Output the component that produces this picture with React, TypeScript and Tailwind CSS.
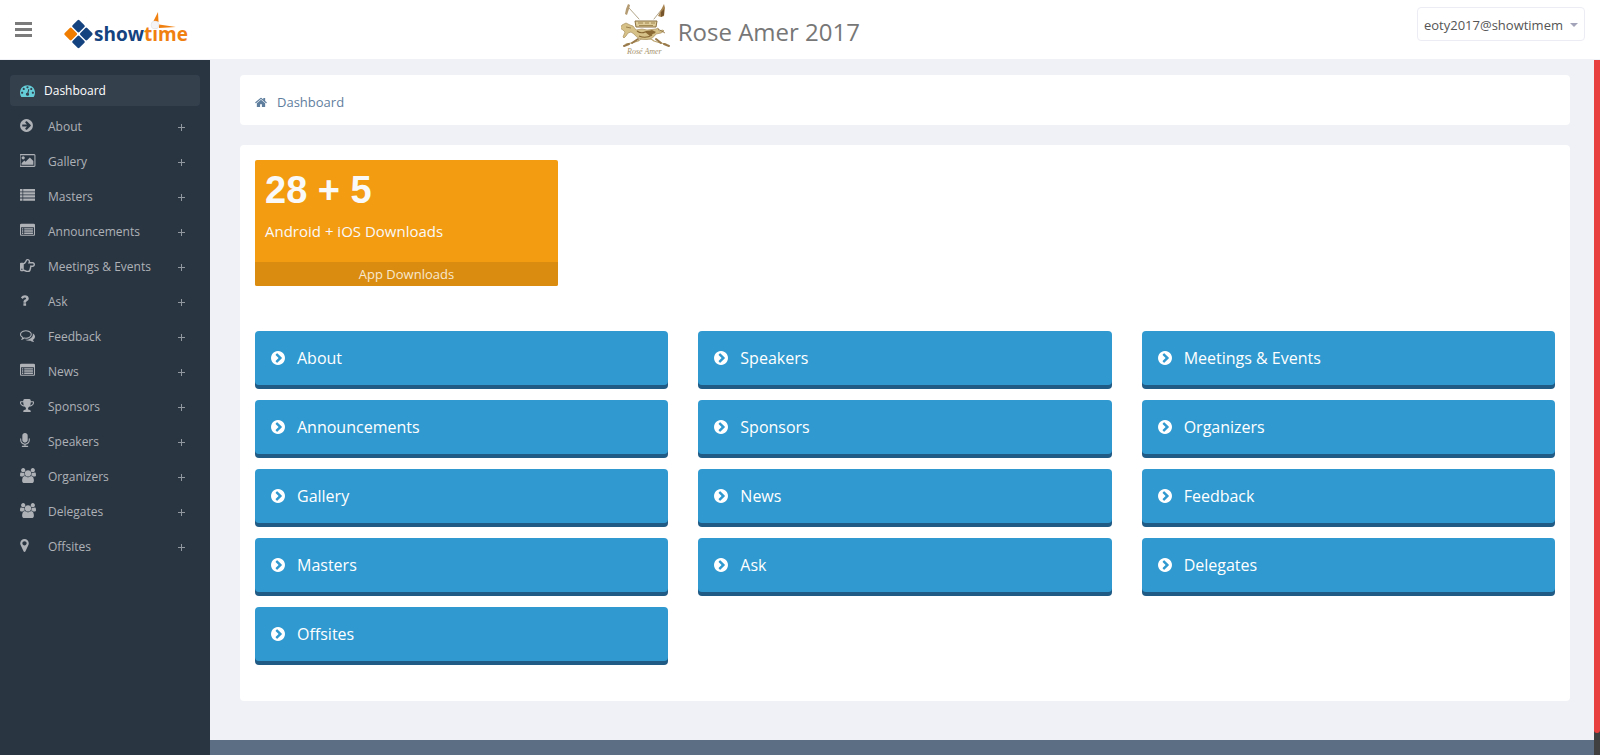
import React from "react";
import { FaRegHandPointRight } from "react-icons/fa";

type Glyph = { box: string; w: string; d: string };

const glyphs: Record<string, Glyph> = {
  dashboard: {
    box: "0 0 1792 1792",
    w: "w-[15px]",
    d: "M384 1152q0-53-37.5-90.5t-90.5-37.500-90.500 37.500-37.500 90.500 37.500 90.500 90.500 37.500 90.500-37.500 37.500-90.500zm192-448q0-53-37.500-90.500t-90.500-37.500-90.500 37.500-37.500 90.500 37.500 90.500 90.500 37.500 90.500-37.500 37.500-90.500zm428 481l101-382q6-26-7.500-48.500t-38.500-29.500-48 6.500-30 39.500l-101 382q-60 5-107 43.500t-63 98.500q-20 77 20 146t117 89 146-20 89-117q16-60-6-117t-72-91zm660-33q0-53-37.500-90.500t-90.500-37.500-90.500 37.500-37.500 90.500 37.500 90.500 90.500 37.500 90.500-37.500 37.500-90.500zm-640-640q0-53-37.500-90.500t-90.500-37.500-90.500 37.500-37.500 90.500 37.500 90.500 90.500 37.500 90.500-37.500 37.500-90.500zm448 192q0-53-37.500-90.500t-90.500-37.500-90.500 37.500-37.500 90.500 37.500 90.500 90.500 37.500 90.500-37.500 37.500-90.500zm320 448q0 261-141 483-19 29-54 29h-1402q-35 0-54-29-141-221-141-483 0-182 71-348t191-286 286-191 348-71 348 71 286 191 191 286 71 348z",
  },
  arrow: {
    box: "128 0 1536 1792",
    w: "w-[13px]",
    d: "M1413 896q0-27-18-45l-91-91-362-362q-18-18-45-18t-45 18l-91 91q-18 18-18 45t18 45l189 189h-502q-26 0-45 19t-19 45v128q0 26 19 45t45 19h502l-189 189q-19 19-19 45t19 45l91 91q18 18 45 18t45-18l362-362 91-91q18-18 18-45zm251 0q0 209-103 385.500t-279.500 279.500-385.500 103-385.500-103-279.500-279.500-103-385.500 103-385.500 279.500-279.500 385.500-103 385.500 103 279.500 279.500 103 385.500z",
  },
  picture: {
    box: "-64 0 1920 1792",
    w: "w-4",
    d: "M512 576q0 80-56 136t-136 56-136-56-56-136 56-136 136-56 136 56 56 136zm1024 384v448h-1408v-192l320-320 160 160 512-512zm96-704h-1600q-13 0-22.500 9.500t-9.500 22.500v1216q0 13 9.500 22.500t22.500 9.500h1600q13 0 22.500-9.500t9.500-22.500v-1216q0-13-9.500-22.500t-22.500-9.500zm160 32v1216q0 66-47 113t-113 47h-1600q-66 0-113-47t-47-113v-1216q0-66 47-113t113-47h1600q66 0 113 47t47 113z",
  },
  list: {
    box: "0 0 15 15",
    w: "w-[15px]",
    d: "M0 1h2.500v2.400H0zM3.200 1H15v2.400H3.200zM0 4.200h2.500v2.300H0zM3.200 4.200H15v2.300H3.200zM0 7.300h2.500v2.300H0zM3.200 7.300H15v2.300H3.200zM0 10.400h2.500v2.400H0zM3.200 10.400H15v2.400H3.200z",
  },
  listAlt: {
    box: "0 0 1792 1792",
    w: "w-[15px]",
    d: "M240 1140h150v160H240zM240 880h150v160H240zM240 620h150v160H240zM500 1140h1050v160H500zM500 880h1050v160H500zM500 620h1050v160H500zM1664 1376V544q0-13-9.500-22.500T1632 512H160q-13 0-22.500 9.500T128 544v832q0 13 9.500 22.500t22.500 9.500h1472q13 0 22.500-9.500t9.500-22.500zM1792 240v1136q0 66-47 113t-113 47H160q-66 0-113-47T0 1376V240q0-66 47-113t113-47h1472q66 0 113 47t47 113z",
  },
  question: {
    box: "384 0 1024 1792",
    w: "w-[9px]",
    d: "M1088 1256v240q0 16-12 28t-28 12h-240q-16 0-28-12t-12-28v-240q0-16 12-28t28-12h240q16 0 28 12t12 28zm316-600q0 54-15.500 101t-35 76.500-55 59.500-57.500 43.500-61 35.500q-41 23-68.500 65t-27.500 67q0 17-12 32.500t-28 15.500h-240q-15 0-25.500-18.500t-10.500-37.500v-45q0-83 65-156.500t143-108.500q59-27 84-56t25-76q0-42-46.500-74t-107.500-32q-65 0-108 29-35 25-107 115-13 16-31 16-12 0-25-8l-164-125q-13-10-15.500-25t5.500-28q160-266 464-266 80 0 161 31t146 83 106 127.500 41 158.500z",
  },
  comments: {
    box: "0 0 1792 1792",
    w: "w-[15px]",
    d: "M704 384q-153 0-286 52t-211.500 141-78.500 191q0 82 53 158t149 132l97 56-35 84q34-20 62-39l44-31 53 10q78 14 153 14 153 0 286-52t211.500-141 78.500-191-78.500-191-211.500-141-286-52zm0-128q191 0 353.500 68.500t256.500 186.500 94 257-94 257-256.500 186.500-353.500 68.500q-86 0-176-16-124 88-278 128-36 9-86 16h-3q-11 0-20.500-8t-11.500-21q-1-3-1-6.500t.5-6.500 2-6l2.500-5 3.500-5.500 4-5 4.500-5 4-4.500q5-6 23-25t26-29.500 22.500-29 25-38.500 20.500-44q-124-72-195-177t-71-224q0-139 94-257t256.500-186.500 353.500-68.500zm822 1169q10 24 20.500 44t25 38.500 22.500 29 26 29.500 23 25q1 1 4 4.500t4.500 5 4 5 3.500 5.500l2.500 5 2 6 .5 6.500-1 6.500q-3 14-13 22t-22 7q-50-7-86-16-154-40-278-128-90 16-176 16-271 0-472-132 58 4 88 4 161 0 309-45t264-129q125-92 192-212t67-254q0-77-23-152 129 71 204 178t75 230q0 120-71 224.500t-195 176.500z",
  },
  trophy: {
    box: "64 0 1664 1792",
    w: "w-[14px]",
    d: "M522 883q-74-162-74-371h-256v96q0 78 94.500 162t235.500 113zm1078-275v-96h-256q0 209-74 371 141-29 235.500-113t94.500-162zm128-128v128q0 71-41.500 143t-112 130-173 97.500-215.500 44.500q-42 54-95 95-38 34-52.500 72.500t-14.500 89.500q0 54 30.500 91t97.500 37q75 0 133.500 45.500t58.500 114.500v64q0 14-9 23t-23 9h-832q-14 0-23-9t-9-23v-64q0-69 58.500-114.500t133.500-45.500q67 0 97.500-37t30.500-91q0-51-14.500-89.500t-52.500-72.500q-53-41-95-95-113-5-215.500-44.500t-173-97.500-112-130-41.500-143v-128q0-40 28-68t68-28h288v-96q0-66 47-113t113-47h576q66 0 113 47t47 113v96h288q40 0 68 28t28 68z",
  },
  microphone: {
    box: "320 0 1152 1792",
    w: "w-[10px]",
    d: "M1472 704v128q0 221-147.500 384.500t-364.500 187.500v132h256q26 0 45 19t19 45-19 45-45 19h-640q-26 0-45-19t-19-45 19-45 45-19h256v-132q-217-24-364.500-187.500t-147.500-384.500v-128q0-26 19-45t45-19 45 19 19 45v128q0 185 131.500 316.500t316.500 131.500 316.500-131.500 131.500-316.500v-128q0-26 19-45t45-19 45 19 19 45zm-256-384v512q0 132-94 226t-226 94-226-94-94-226v-512q0-132 94-226t226-94 226 94 94 226z",
  },
  users: {
    box: "0 0 1920 1792",
    w: "w-4",
    d: "M593 896q-162 5-265 128h-134q-82 0-138-40.500t-56-118.500q0-353 124-353 6 0 43.500 21t97.500 42.500 119 21.500q67 0 133-23-5 37-5 66 0 139 81 256zm1071 637q0 120-73 189.500t-194 69.500h-874q-121 0-194-69.500t-73-189.500q0-53 3.500-103.500t14-109 26.500-108.500 43-97.500 62-81 85.500-53.500 111.500-20q10 0 43 21.500t73 48 107 48 135 21.500 135-21.500 107-48 73-48 43-21.500q61 0 111.500 20t85.500 53.500 62 81 43 97.500 26.500 108.500 14 109 3.500 103.500zm-1024-1277q0 106-75 181t-181 75-181-75-75-181 75-181 181-75 181 75 75 181zm704 384q0 159-112.500 271.500t-271.500 112.500-271.500-112.500-112.500-271.500 112.500-271.500 271.500-112.500 271.500 112.500 112.500 271.500zm576 225q0 78-56 118.500t-138 40.500h-134q-103-123-265-128 81-117 81-256 0-29-5-66 66 23 133 23 59 0 119-21.500t97.500-42.500 43.500-21q124 0 124 353zm-128-609q0 106-75 181t-181 75-181-75-75-181 75-181 181-75 181 75 75 181z",
  },
  marker: {
    box: "384 0 1024 1792",
    w: "w-[9px]",
    d: "M1152 640q0-106-75-181t-181-75-181 75-75 181 75 181 181 75 181-75 75-181zm256 0q0 109-33 179l-364 774q-16 33-47.500 52t-67.500 19-67.500-19-46.500-52l-365-774q-33-70-33-179 0-212 150-362t362-150 362 150 150 362z",
  },
};

function Icon({ name }: { name: string }) {
  if (name === "hand") return <FaRegHandPointRight className="size-[15px]" aria-hidden="true" />;
  const g = glyphs[name];
  return (
    <svg viewBox={g.box} className={`h-[15px] ${g.w}`} fill="currentColor" aria-hidden="true">
      <path d={g.d} />
    </svg>
  );
}

const menu: [string, string][] = [
  ["About", "arrow"],
  ["Gallery", "picture"],
  ["Masters", "list"],
  ["Announcements", "listAlt"],
  ["Meetings & Events", "hand"],
  ["Ask", "question"],
  ["Feedback", "comments"],
  ["News", "listAlt"],
  ["Sponsors", "trophy"],
  ["Speakers", "microphone"],
  ["Organizers", "users"],
  ["Delegates", "users"],
  ["Offsites", "marker"],
];

const tiles = [
  "About", "Speakers", "Meetings & Events",
  "Announcements", "Sponsors", "Organizers",
  "Gallery", "News", "Feedback",
  "Masters", "Ask", "Delegates",
  "Offsites",
];

function Logo() {
  return (
    <svg viewBox="0 0 126 42" className="h-[42px] w-[126px]" role="img" aria-label="showtime">
      <g strokeLinejoin="round" strokeWidth="2.600">
        <path d="M14.500 10.200l5 5-5 5-5-5z" fill="#144380" stroke="#144380" />
        <path d="M22.300 18l5 5-5 5-5-5z" fill="#144380" stroke="#144380" />
        <path d="M14.500 25.800l5 5-5 5-5-5z" fill="#144380" stroke="#144380" />
        <path d="M6.700 18l5 5-5 5-5-5z" fill="#f07d00" stroke="#f07d00" />
      </g>
      <text x="30" y="30" className="font-['Open_Sans',sans-serif] text-[19px] font-bold" fill="#144380">
        show<tspan fill="#f08010">time</tspan>
      </text>
      <path d="M89.500 10L94 1l.5 10zM95 13.500l17 2.500-17 1z" fill="#f08010" />
      <circle cx="91" cy="14" r="4" fill="#f4f4f6" stroke="#dcdce0" strokeWidth=".5" />
    </svg>
  );
}

function Crest() {
  return (
    <svg viewBox="0 0 50 52" className="h-[52px] w-[50px]" role="img" aria-label="Rose Amer crest">
      <g fill="none" strokeLinecap="round">
        <path d="M8 5l10 11M41 6l-8 10" stroke="#a99b7c" strokeWidth=".9" />
        <path d="M5 41q7-1 12-3 3-3 8-2 5-1 8 2 5 2 12 3" strokeWidth="1.200" stroke="#bca672" />
        <path d="M3 43l5-2M11 40l6-4M35 36l5 4M43 41l5 2" strokeWidth="2" stroke="#98794a" />
      </g>
      <path d="M7 1l2 1-1 4-2 6-2-1 1-5z" fill="#b59b72" />
      <path d="M43 1l1 4-1 8-3 1-3-1 3-6z" fill="#a88450" />
      <path d="M40 9l3-3v6l-3 2z" fill="#75532b" />
      <path d="M14 18h22l-1 6H15z" fill="#ddcb9a" stroke="#8b7040" strokeWidth="1" />
      <path d="M17 20h5M24 20h4M30 20h4M18 22.500h14" stroke="#9b8048" strokeWidth=".9" />
      <path d="M1 22l4-2 4 2 3 1 3 4 6-1 5 1 9-1 2-1 1 3 4-1 1 1-3 2-5 1q-3 5-9 5.500-9 .5-13-5.500l-3-2-3 1-2 3-2 2-1-1 2-5-2-2-3-2z" fill="#d6c189" stroke="#aa9160" strokeWidth=".7" />
      <path d="M16 28q4 3 8 1t10 1M18 33q7 3 13-1" fill="none" stroke="#85652f" strokeWidth="1.100" />
      <path d="M24 29l7-2 4 2-6 4z" fill="#8c6a35" />
      <path d="M5 24l5 1M37 26l7 4" stroke="#8c6f3c" strokeWidth=".8" fill="none" />
      <text x="6" y="51" className="font-['Liberation_Serif',serif] text-[8px] italic" fill="#a8946e">Rosé Amer</text>
    </svg>
  );
}

export default function App() {
  return (
    <div className="flex min-h-screen flex-col bg-[#f0f1f6] font-['Open_Sans',sans-serif] text-[13px] leading-5">
      <header className="flex h-[60px] items-start border-b border-[#f0f1f6] bg-white">
        <div className="flex w-[38.8%] items-start pl-[15px]">
          <button type="button" aria-label="Toggle menu" className="mt-[22px] flex w-[17px] flex-col gap-[3px]">
            <span className="h-[3px] w-full bg-[#7b7b7b]" />
            <span className="h-[3px] w-full bg-[#7b7b7b]" />
            <span className="h-[3px] w-full bg-[#7b7b7b]" />
          </button>
          <a href="#" className="mt-[11px] ml-8"><Logo /></a>
        </div>
        <div className="flex flex-1 items-center gap-[7px] pt-[3px]">
          <Crest />
          <h1 className="pt-1.5 text-[24px] leading-8 text-[#777]">Rose Amer 2017</h1>
        </div>
        <button type="button" className="mt-[7px] mr-[15px] flex h-[34px] items-center gap-[7px] rounded border border-[#ecedf4] px-1.5 pt-0.5 text-[#555]">
          eoty2017@showtimem
          <svg viewBox="0 0 8 4" className="h-1 w-2" fill="#a3a3b9" aria-hidden="true"><path d="M0 0h8L4 4z" /></svg>
        </button>
      </header>

      <div className="flex flex-1">
        <nav className="w-[210px] shrink-0 bg-[#2a3542] px-2.5 pt-[15px] text-[12px]">
          <a href="#" className="mb-[3px] flex h-[31px] items-center gap-[9px] rounded bg-[#35404d] pl-2.5 text-white">
            <span className="text-[#65cdd8]"><Icon name="dashboard" /></span>
            Dashboard
          </a>
          <ul>
            {menu.map(([label, icon]) => (
              <li key={label}>
                <a href="#" className="flex h-[35px] items-center pr-[15px] pl-2.5 text-[#aeb2b7]">
                  <span className="w-7 pb-[3px]"><Icon name={icon} /></span>
                  <span className="flex-1">{label}</span>
                  <svg viewBox="0 0 7 7" className="mt-0.5 size-[7px]" stroke="#92989f" aria-hidden="true">
                    <path d="M0 3.500h7M3.500 0v7" />
                  </svg>
                </a>
              </li>
            ))}
          </ul>
        </nav>

        <div className="flex min-w-0 flex-1 flex-col">
          <main className="flex flex-col gap-5 pt-[15px] pr-6 pb-[39px] pl-[30px]">
            <nav aria-label="Breadcrumb" className="rounded bg-white p-[15px]">
              <a href="#" className="flex h-5 items-center gap-2.5 pt-1 text-[#5f7e9e]">
                <svg viewBox="64 0 1664 1792" className="h-[13px] w-3" fill="currentColor" aria-hidden="true">
                  <path d="M1472 992v480q0 26-19 45t-45 19h-384v-384h-256v384h-384q-26 0-45-19t-19-45v-480q0-1 .5-3t.5-3l575-474 575 474q1 2 1 6zm223-69l-62 74q-8 9-21 11h-3q-13 0-21-7l-692-577-692 577q-12 8-24 7-13-2-21-11l-62-74q-8-10-7-23.500t11-21.500l719-599q32-26 76-26t76 26l244 204v-195q0-14 9-23t23-9h192q14 0 23 9t9 23v408l219 182q10 8 11 21.500t-7 23.500z" />
                </svg>
                Dashboard
              </a>
            </nav>

            <section className="rounded bg-white px-[15px] pt-[15px] pb-10">
              <div className="mb-[45px] w-[303px] overflow-hidden rounded-xs bg-[#f39c12] text-[#f9f9f9]">
                <div className="h-[102px] px-2.5 pt-2.5">
                  <p className="font-['Liberation_Sans',sans-serif] text-[38px] leading-10 font-bold">28 + 5</p>
                  <p className="mt-[11px] text-[15px] leading-5">Android + iOS Downloads</p>
                </div>
                <a href="#" className="block h-6 bg-[#da8c10] text-center leading-6 text-[#f8e8cf]">App Downloads</a>
              </div>
              <div className="grid grid-cols-3 gap-x-[30px] gap-y-[15px]">
                {tiles.map((label) => (
                  <a key={label} href="#" className="flex h-[54px] items-center gap-3 rounded bg-[#3099cf] pl-4 text-[16px] text-white shadow-[0_4px_0_#205b86]">
                    <svg viewBox="128 128 1536 1536" className="size-3.5" fill="currentColor" aria-hidden="true">
                      <path d="M845 1395l454-454q19-19 19-45t-19-45l-454-454q-19-19-45-19t-45 19l-102 102q-19 19-19 45t19 45l307 307-307 307q-19 19-19 45t19 45l102 102q19 19 45 19t45-19zm819-499q0 209-103 385.500t-279.500 279.500-385.500 103-385.500-103-279.500-279.500-103-385.500 103-385.500 279.500-279.500 385.500-103 385.500 103 279.500 279.500 103 385.500z" />
                    </svg>
                    {label}
                  </a>
                ))}
              </div>
            </section>
          </main>
          <footer className="min-h-[15px] flex-1 bg-[#5b6e84]" />
        </div>

        <div className="flex w-1.5 shrink-0 flex-col bg-[#404040]" aria-hidden="true">
          <div className="mb-[22px] flex-1 rounded-b-full bg-[#e8403f]" />
        </div>
      </div>
    </div>
  );
}
